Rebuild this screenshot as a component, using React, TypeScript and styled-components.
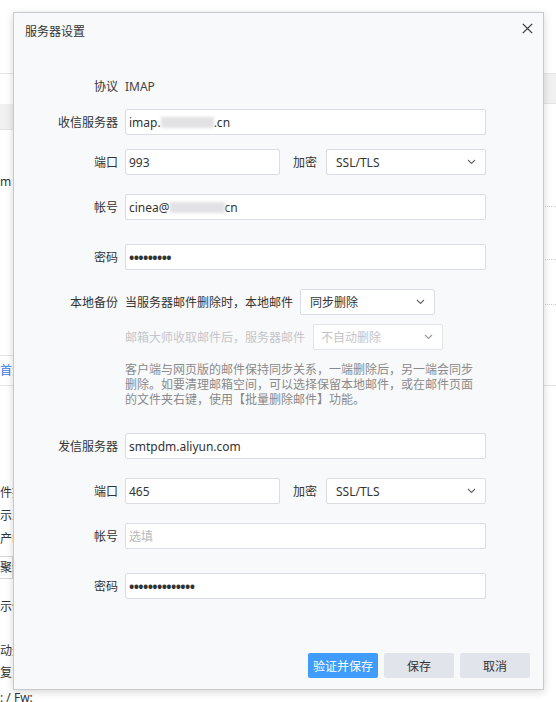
import styled, { createGlobalStyle } from "styled-components";

const GlobalStyle = createGlobalStyle`
	html,body{margin:0;padding:0;background:#fff;}
	body{font-family:"Noto Sans","Noto Sans CJK SC",sans-serif;font-size:12px;color:#333;}
	*{box-sizing:border-box;}
`;

const Page = styled.div`
	position:relative;width:556px;height:702px;overflow:hidden;background:#fff;
`;

const Backdrop = styled.div`
	display:grid;grid-template-columns:13px 1fr 13px;grid-template-rows:74px 1fr;height:100%;
`;

const BackHeader = styled.div`
	grid-column:1 / -1;border-bottom:1px solid #e6e6e6;
`;

const BackColumn = styled.div`
	display:flex;flex-direction:column;white-space:nowrap;
`;

const BackBand = styled.div<{ $top: number; $h: number }>`
	margin-top:${p => p.$top}px;height:${p => p.$h}px;background:#f1f1f2;border-bottom:1px solid #e4e4e4;
`;

const BackText = styled.div<{ $top: number }>`
	margin-top:${p => p.$top}px;height:23px;line-height:23px;color:#333;font-size:12px;
`;

const BackTab = styled.div<{ $top: number }>`
	margin-top:${p => p.$top}px;height:31px;line-height:30px;border-top:1px solid #e4e4e4;border-bottom:1px solid #e4e4e4;
	color:#3a78e6;
`;

const BackBox = styled.div<{ $top: number }>`
	margin-top:${p => p.$top}px;height:23px;line-height:21px;border:1px solid #d6d6d6;border-left:none;
`;

const BackLine = styled.div<{ $top: number; $dotted?: boolean }>`
	margin-top:${p => p.$top}px;height:0;border-top:1px ${p => p.$dotted ? "dotted #cfcfcf" : "solid #e0e0e0"};
`;

const Dialog = styled.div`
	position:absolute;left:13px;top:12px;width:531px;height:678px;
	display:flex;flex-direction:column;
	background:#f8f9fb;border:1px solid #c9c9c9;box-shadow:0 2px 8px rgba(0,0,0,0.16);
`;

const DialogHeader = styled.div`
	display:flex;align-items:center;justify-content:space-between;height:36px;padding:0 10px 0 11px;
`;

const DialogTitle = styled.div`
	font-size:12px;color:#333;
`;

const CloseButton = styled.button`
	display:flex;align-items:center;justify-content:center;width:12px;height:12px;padding:0;margin-top:-6px;
	border:none;background:none;cursor:pointer;
`;

const Form = styled.div`
	display:flex;flex-direction:column;padding-top:24px;
`;

const Row = styled.div<{ $top: number }>`
	display:grid;grid-template-columns:104px 361px;column-gap:7px;align-items:center;min-height:26px;
	margin-top:${p => p.$top}px;
`;

const Label = styled.div`
	text-align:right;color:#333;white-space:nowrap;
`;

const Value = styled.div`
	color:#444;
`;

const Field = styled.div<{ $w?: number }>`
	display:flex;align-items:center;height:26px;padding:0 8px 0 3px;
	${p => p.$w ? `width:${p.$w}px;flex:none;` : "flex:1;"}
	background:#fff;border:1px solid #dadde3;border-radius:2px;color:#333;white-space:nowrap;
`;

const Placeholder = styled.span`
	color:#b8b8b8;
`;

const Masked = styled.span<{ $w: number }>`
	display:inline-block;width:${p => p.$w}px;height:11px;background:#e2e2e4;filter:blur(1.5px);
`;

const Dots = styled.span`
	font-size:14px;letter-spacing:-0.6px;color:#333;font-weight:700;
`;

const Select = styled.div<{ $w?: number; $disabled?: boolean }>`
	display:flex;align-items:center;justify-content:space-between;height:26px;padding:0 9px 0 ${p => p.$disabled ? 7 : 9}px;
	${p => p.$w ? `width:${p.$w}px;flex:none;` : "flex:1;"}
	background:#fff;border:1px solid ${p => p.$disabled ? "#e3e5e9" : "#dadde3"};border-radius:2px;
	color:${p => p.$disabled ? "#c2c4c8" : "#333"};white-space:nowrap;
`;

const Inline = styled.div`
	display:flex;align-items:center;
`;

const InlineLabel = styled.span<{ $gap: number; $muted?: boolean }>`
	margin:0 ${p => p.$gap}px;color:${p => p.$muted ? "#c4c6ca" : "#333"};white-space:nowrap;
	&:first-child{margin-left:0;}
`;

const Note = styled.div`
	grid-column:2;width:352px;line-height:15px;color:#8a8a8a;font-size:12px;
`;

const Footer = styled.div`
	display:flex;justify-content:flex-end;gap:6px;margin-top:auto;padding:0 13px 11px 0;
`;

const Button = styled.button<{ $primary?: boolean }>`
	width:70px;height:25px;padding:0;border:none;border-radius:2px;cursor:pointer;
	font-family:inherit;font-size:12px;
	background:${p => p.$primary ? "#3f9cfc" : "#e1e4ea"};color:${p => p.$primary ? "#fff" : "#333"};
`;

function Chevron({ color = "#666" }: { color?: string }) {
	return (
		<svg width="9" height="6" viewBox="0 0 9 6">
			<path d="M1 1l3.5 3.5L8 1" fill="none" stroke={color} strokeWidth="1.1"/>
		</svg>
	);
}

function App() {
	return (
		<>
			<GlobalStyle/>
			<Page>
				<Backdrop>
					<BackHeader/>
					<BackColumn>
						<BackBand $top={30} $h={26}/>
						<BackText $top={40}>m</BackText>
						<BackTab $top={162}>首资</BackTab>
						<BackText $top={95}>件提</BackText>
						<BackText $top={0}>示发</BackText>
						<BackText $top={0}>产邮</BackText>
						<BackBox $top={6}>聚合</BackBox>
						<BackText $top={16}>示信</BackText>
						<BackText $top={21}>动进</BackText>
						<BackText $top={-1}>复：</BackText>
						<BackText $top={2}>: / Fw:</BackText>
					</BackColumn>
					<div/>
					<BackColumn>
						<BackBand $top={0} $h={30}/>
						<BackLine $top={102} $dotted/>
						<BackLine $top={52} $dotted/>
						<BackLine $top={44} $dotted/>
						<BackLine $top={80}/>
					</BackColumn>
				</Backdrop>

				<Dialog>
					<DialogHeader>
						<DialogTitle>服务器设置</DialogTitle>
						<CloseButton>
							<svg width="11" height="11" viewBox="0 0 11 11">
								<path d="M0.8 0.8l9.4 9.4M10.2 0.8l-9.4 9.4" stroke="#333" strokeWidth="1.2"/>
							</svg>
						</CloseButton>
					</DialogHeader>

					<Form>
						<Row $top={0}>
							<Label>协议</Label>
							<Value>IMAP</Value>
						</Row>
						<Row $top={10}>
							<Label>收信服务器</Label>
							<Field>imap.<Masked $w={53}/>.cn</Field>
						</Row>
						<Row $top={14}>
							<Label>端口</Label>
							<Inline>
								<Field $w={155}>993</Field>
								<InlineLabel $gap={13}>加密</InlineLabel>
								<Select style={{ marginLeft: -4 }}>SSL/TLS<Chevron/></Select>
							</Inline>
						</Row>
						<Row $top={19}>
							<Label>帐号</Label>
							<Field>cinea@<Masked $w={55}/>cn</Field>
						</Row>
						<Row $top={24}>
							<Label>密码</Label>
							<Field><Dots>•••••••••</Dots></Field>
						</Row>
						<Row $top={19}>
							<Label>本地备份</Label>
							<Inline>
								<InlineLabel $gap={7}>当服务器邮件删除时，本地邮件</InlineLabel>
								<Select $w={135}>同步删除<Chevron/></Select>
							</Inline>
						</Row>
						<Row $top={9}>
							<div/>
							<Inline>
								<InlineLabel $gap={8} $muted>邮箱大师收取邮件后，服务器邮件</InlineLabel>
								<Select $w={130} $disabled>不自动删除<Chevron color="#999"/></Select>
							</Inline>
						</Row>
						<Row $top={12}>
							<div/>
							<Note>客户端与网页版的邮件保持同步关系，一端删除后，另一端会同步删除。如要清理邮箱空间，可以选择保留本地邮件，或在邮件页面的文件夹右键，使用【批量删除邮件】功能。</Note>
						</Row>
						<Row $top={26}>
							<Label>发信服务器</Label>
							<Field>smtpdm.aliyun.com</Field>
						</Row>
						<Row $top={19}>
							<Label>端口</Label>
							<Inline>
								<Field $w={155}>465</Field>
								<InlineLabel $gap={13}>加密</InlineLabel>
								<Select style={{ marginLeft: -4 }}>SSL/TLS<Chevron/></Select>
							</Inline>
						</Row>
						<Row $top={19}>
							<Label>帐号</Label>
							<Field><Placeholder>选填</Placeholder></Field>
						</Row>
						<Row $top={24}>
							<Label>密码</Label>
							<Field><Dots>••••••••••••••</Dots></Field>
						</Row>
					</Form>

					<Footer>
						<Button $primary>验证并保存</Button>
						<Button>保存</Button>
						<Button>取消</Button>
					</Footer>
				</Dialog>
			</Page>
		</>
	);
}

export default App;
